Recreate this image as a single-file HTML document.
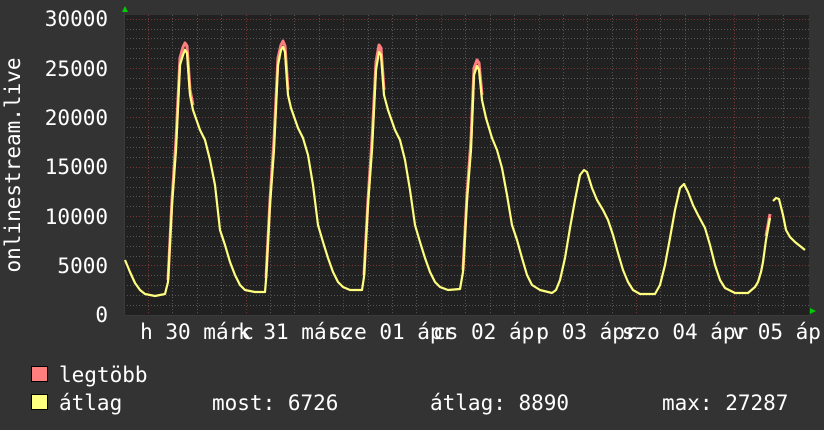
<!DOCTYPE html>
<html><head><meta charset="utf-8"><style>
html,body{margin:0;padding:0;background:#333;}
svg{display:block;font-family:"DejaVu Sans Mono","Liberation Mono",monospace;}
</style></head><body>
<svg width="824" height="430" viewBox="0 0 824 430" xmlns="http://www.w3.org/2000/svg">
<rect width="824" height="430" fill="#333"/>
<rect x="124" y="15" width="685" height="300" fill="#212121"/>
<g stroke="#555" stroke-width="1" stroke-dasharray="1,2">
<path d="M124 305.5H809M124 295.5H809M124 285.5H809M124 275.5H809M124 256.5H809M124 246.5H809M124 236.5H809M124 226.5H809M124 206.5H809M124 196.5H809M124 187.5H809M124 177.5H809M124 157.5H809M124 147.5H809M124 137.5H809M124 127.5H809M124 108.5H809M124 98.5H809M124 88.5H809M124 78.5H809M124 58.5H809M124 48.5H809M124 38.5H809M124 29.5H809"/>
<path d="M172.5 15V315M197.5 15V315M221.5 15V315M270.5 15V315M294.5 15V315M319.5 15V315M368.5 15V315M392.5 15V315M416.5 15V315M465.5 15V315M490.5 15V315M514.5 15V315M563.5 15V315M587.5 15V315M612.5 15V315M660.5 15V315M685.5 15V315M709.5 15V315M758.5 15V315M783.5 15V315"/>
</g>
<g stroke="#7a3535" stroke-width="1" stroke-dasharray="1,2">
<path d="M124 265.5H809M124 216.5H809M124 167.5H809M124 117.5H809M124 68.5H809M124 19.5H809"/>
<path d="M148.5 15V315M246.5 15V315M343.5 15V315M441.5 15V315M539.5 15V315M636.5 15V315M734.5 15V315"/>
</g>
<path d="M124 315.5H811M124.5 315V8" stroke="#3a3a3a" stroke-width="1"/>
<path d="M122 12L125 6L128 12Z" fill="#0c0"/>
<path d="M810 308L816 311L810 314Z" fill="#0c0"/>
<g fill="none" stroke-linejoin="round" stroke="#ff7f7f" stroke-width="3">
<polyline points="168,280 172,200 176,140 180,58 183,47 185,43 187,46 190,90 193,105"/>
<polyline points="266,278 270,200 274,140 278,58 281,45 283,41 285,46 288,90"/>
<polyline points="364,275 368,200 372,140 376,62 379,45 381,48 384,90"/>
<polyline points="463,270 467,195 471,140 474,68 477,60 479,63 482,95"/>
<polyline points="766,236 770,214"/>
</g>
<g fill="none" stroke-linejoin="round" stroke="#ffff7f" stroke-width="2.2">
<polyline points="125,260 130,272 135,283 140,290 145,294 155,296 165,294 168,282 172,205 176,150 180,65 183,55 185,50 187,53 190,95 193,110 200,130 205,140 210,160 215,185 220,230 225,245 230,262 235,275 240,285 245,290 255,292 265,292 266,280 270,205 274,150 278,65 281,50 283,47 285,52 288,95 291,108 298,128 303,138 308,155 313,185 318,225 323,242 328,258 333,272 338,282 343,287 350,290 362,290 364,277 368,205 372,150 376,70 379,52 381,55 384,95 388,110 395,130 400,140 405,160 410,190 415,225 420,242 425,258 430,272 435,282 440,287 448,290 460,289 463,272 467,200 471,150 474,75 477,66 479,70 482,100 486,118 492,138 497,150 502,168 507,195 512,225 517,240 522,258 527,275 532,285 540,290 552,293 556,290 560,280 565,258 570,228 575,200 580,175 584,170 587,172 592,188 597,200 603,210 608,220 613,235 618,253 623,270 628,282 633,290 640,294 655,294 660,285 665,265 670,238 675,210 680,188 684,184 688,192 693,205 698,215 705,228 710,245 715,265 720,280 725,288 735,293 748,293 755,287 758,282 761,272 763,262 766,240 770,218"/>
<polyline points="773,201 776,198 779,199 783,215 786,230 790,237 795,242 805,250"/>
</g>
<g fill="#fff" font-size="21" text-anchor="end">
<text x="108" y="26">30000</text>
<text x="108" y="76">25000</text>
<text x="108" y="125">20000</text>
<text x="108" y="174">15000</text>
<text x="108" y="224">10000</text>
<text x="108" y="273">5000</text>
<text x="108" y="322">0</text>
</g>
<text transform="translate(20,165) rotate(-90)" fill="#fff" font-size="21" text-anchor="middle">onlinestream.live</text>
<g fill="#fff" font-size="21" text-anchor="middle">
<text x="197" y="339">h 30 márc</text>
<text x="295" y="339">k 31 márc</text>
<text x="392" y="339">sze 01 ápr</text>
<text x="490" y="339">cs 02 ápr</text>
<text x="587" y="339">p 03 ápr</text>
<text x="685" y="339">szo 04 ápr</text>
<text x="783" y="339">v 05 ápr</text>
</g>
<rect x="31.5" y="366.5" width="16" height="15" fill="#ff7f7f" stroke="#000"/>
<rect x="31.5" y="394.5" width="16" height="15" fill="#ffff7f" stroke="#000"/>
<g fill="#fff" font-size="21">
<text x="59" y="382">legtöbb</text>
<text x="59" y="410">átlag</text>
<text x="212" y="410">most: 6726</text>
<text x="430" y="410">átlag: 8890</text>
<text x="662" y="410">max: 27287</text>
</g>
</svg>
</body></html>
